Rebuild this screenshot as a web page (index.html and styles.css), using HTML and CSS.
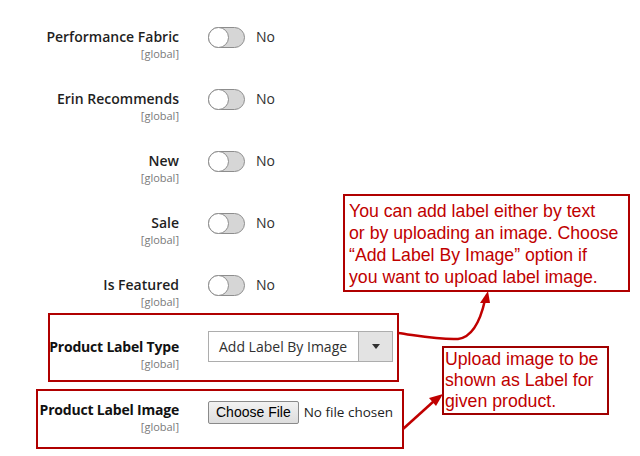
FILE: index.html
```html
<!DOCTYPE html>
<html lang="en">
<head>
    <meta charset="UTF-8">
    <meta name="viewport" content="width=device-width, initial-scale=1.0">
    <title>Product Label Settings</title>
    <link rel="stylesheet" href="styles.css">
</head>
<body>
    <div class="page">
        <!-- Attribute rows -->
        <div class="row">
            <div class="label"><span class="title">Performance Fabric</span><span class="scope">[global]</span></div>
            <div class="control"><span class="switch"></span><span class="value">No</span></div>
        </div>
        <div class="row">
            <div class="label"><span class="title">Erin Recommends</span><span class="scope">[global]</span></div>
            <div class="control"><span class="switch"></span><span class="value">No</span></div>
        </div>
        <div class="row">
            <div class="label"><span class="title">New</span><span class="scope">[global]</span></div>
            <div class="control"><span class="switch"></span><span class="value">No</span></div>
        </div>
        <div class="row">
            <div class="label"><span class="title">Sale</span><span class="scope">[global]</span></div>
            <div class="control"><span class="switch"></span><span class="value">No</span></div>
        </div>
        <div class="row">
            <div class="label"><span class="title">Is Featured</span><span class="scope">[global]</span></div>
            <div class="control"><span class="switch"></span><span class="value">No</span></div>
        </div>

        <div class="row row-select">
            <div class="label"><span class="title strong">Product Label Type</span><span class="scope">[global]</span></div>
            <div class="control">
                <div class="select">
                    <span class="select-text">Add Label By Image</span>
                    <span class="select-btn"><span class="caret"></span></span>
                </div>
            </div>
        </div>

        <div class="row row-file">
            <div class="label"><span class="title strong">Product Label Image</span><span class="scope">[global]</span></div>
            <div class="control">
                <span class="file-btn">Choose File</span>
                <span class="file-name">No file chosen</span>
            </div>
        </div>

        <!-- Annotations -->
        <div class="mark mark-type"></div>
        <div class="mark mark-image"></div>

        <div class="note note-type">You can add label either by text<br>or by uploading an image. Choose<br>&ldquo;Add Label By Image&rdquo; option if<br>you want to upload label image.</div>
        <div class="note note-image">Upload image to be<br>shown as Label for<br>given product.</div>

        <svg class="arrows" width="640" height="456" viewBox="0 0 640 456">
            <path d="M398 333 C 420 336, 440 340, 458 339 C 474 337, 481 318, 485 300" fill="none" stroke="#c00000" stroke-width="2.5"/>
            <polygon points="488,291 480,303 490,303" fill="#c00000"/>
            <path d="M403 429 L 434 401" fill="none" stroke="#c00000" stroke-width="2.5"/>
            <polygon points="443,394 429,398 436,406" fill="#c00000"/>
        </svg>
    </div>
</body>
</html>
```

FILE: styles.css
```css
body {
    margin: 0;
    background: #fff;
    color: #303030;
    font-family: 'Open Sans', sans-serif;
}
.page {
    position: relative;
    width: 640px;
    height: 456px;
    overflow: hidden;
    padding-top: 27px;
    box-sizing: border-box;
}
.row {
    display: flex;
    align-items: flex-start;
    height: 62px;
}
.label {
    width: 179px;
    display: flex;
    flex-direction: column;
    align-items: flex-end;
    text-align: right;
    padding-right: 29px;
}
.title {
    font-size: 14px;
    font-weight: 600;
    line-height: 20px;
    color: #1f1f1f;
    white-space: nowrap;
}
.title.strong {
    font-weight: 700;
    letter-spacing: -0.2px;
    color: #111;
}
.scope {
    font-size: 11px;
    line-height: 12px;
    color: #7a7a7a;
    margin-top: 1px;
}
.control {
    display: flex;
    align-items: center;
    height: 20px;
}
.switch {
    position: relative;
    width: 35px;
    height: 19px;
    border: 1px solid #8d8d8d;
    border-radius: 11px;
    background: #d6d6d6;
}
.switch::before {
    content: '';
    position: absolute;
    left: -1px;
    top: -1px;
    width: 19px;
    height: 19px;
    border: 1px solid #8d8d8d;
    border-radius: 50%;
    background: #fff;
}
.value {
    margin-left: 11px;
    font-size: 14px;
    line-height: 20px;
}

/* select row */
.row-select {
    margin-top: -6px;
    height: 69px;
}
.row-select .label {
    padding-top: 6px;
}
.row-select .control {
    height: auto;
}
.select {
    display: flex;
    width: 185px;
    height: 31px;
    border: 1px solid #adadad;
    box-sizing: border-box;
    background: #fff;
}
.select-text {
    flex: 1;
    padding-left: 10px;
    font-size: 14px;
    line-height: 29px;
    color: #303030;
}
.select-btn {
    width: 33px;
    border-left: 1px solid #adadad;
    background: #e3e3e3;
    display: flex;
    align-items: center;
    justify-content: center;
}
.caret {
    width: 0;
    height: 0;
    border-left: 4px solid transparent;
    border-right: 4px solid transparent;
    border-top: 5px solid #303030;
}

/* file row */
.row-file .control {
    height: 22px;
    margin-top: 1px;
}
.file-btn {
    height: 21px;
    padding: 0 7px;
    border: 1px solid #8a8a8a;
    border-radius: 2px;
    background: linear-gradient(#f2f2f2, #dddddd);
    font-family: 'Liberation Sans', Arial, sans-serif;
    font-size: 14px;
    line-height: 20px;
    color: #000;
}
.file-name {
    margin-left: 5px;
    font-size: 13.5px;
    color: #222;
}

/* red annotation boxes */
.mark {
    position: absolute;
    border: 2px solid #b00000;
    box-sizing: border-box;
}
.mark-type {
    left: 48px;
    top: 313px;
    width: 351px;
    height: 69px;
}
.mark-image {
    left: 36px;
    top: 389px;
    width: 368px;
    height: 60px;
}
.note {
    position: absolute;
    border: 2px solid #b00000;
    box-sizing: border-box;
    background: #fff;
    color: #c00000;
    font-family: 'Liberation Sans', Arial, sans-serif;
    font-size: 17.7px;
    white-space: nowrap;
}
.note-type {
    left: 343px;
    top: 194px;
    width: 287px;
    height: 98px;
    padding: 4px 4px 0 4px;
    line-height: 22px;
}
.note-image {
    left: 442px;
    top: 346px;
    width: 167px;
    height: 69px;
    padding: 1px 2px 0 1px;
    line-height: 21px;
    border-color: #a00000;
}
.arrows {
    position: absolute;
    left: 0;
    top: 0;
    pointer-events: none;
}
```
